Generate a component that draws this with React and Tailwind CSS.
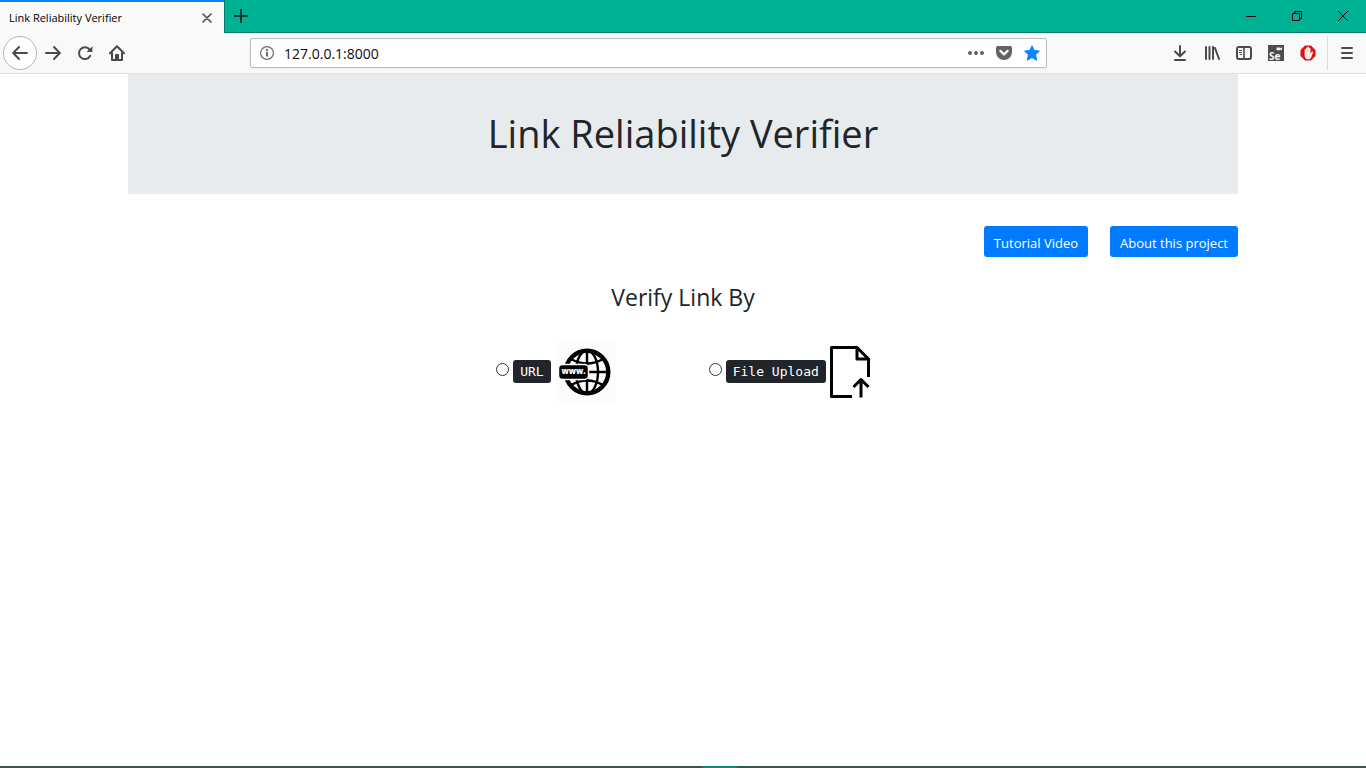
import React from "react";

const ICON = "h-4 w-4 text-[#4a4a4a]";

function BackIcon() {
  return (
    <svg viewBox="0 0 16 16" className={ICON} fill="none" stroke="currentColor" strokeWidth="2" strokeLinecap="round" strokeLinejoin="round">
      <path d="M15 8H1.5M7 2L1.2 8L7 14" />
    </svg>
  );
}

function ForwardIcon() {
  return (
    <svg viewBox="0 0 16 16" className={ICON} fill="none" stroke="currentColor" strokeWidth="2" strokeLinecap="round" strokeLinejoin="round">
      <path d="M1 8H14.5M9 2L14.8 8L9 14" />
    </svg>
  );
}

function ReloadIcon() {
  return (
    <svg viewBox="0 0 16 16" className={ICON} fill="none" stroke="currentColor" strokeWidth="2" strokeLinecap="round">
      <path d="M12.6 4.6A5.9 5.9 0 1 0 13.2 10.8" />
      <path d="M15.4 1.2V7H9.6z" fill="currentColor" stroke="none" />
    </svg>
  );
}

function HomeIcon() {
  return (
    <svg viewBox="0 0 16 16" className={ICON} fill="none" stroke="currentColor" strokeWidth="2" strokeLinecap="round" strokeLinejoin="round">
      <path d="M1 8.2L8 1.3L15 8.2" />
      <path d="M3 8V15H13V8" />
      <path d="M6.5 14.5V9.5H9.5V14.5z" fill="currentColor" strokeWidth="1" />
    </svg>
  );
}

function InfoIcon() {
  return (
    <svg viewBox="0 0 16 16" className="h-4 w-4 text-[#6b6b6b]" fill="none" stroke="currentColor">
      <circle cx="8" cy="8" r="6.4" strokeWidth="1.2" />
      <path d="M8 7V11.6" strokeWidth="2" />
      <path d="M8 4V6" strokeWidth="2" />
    </svg>
  );
}

function DotsIcon() {
  return (
    <svg viewBox="0 0 16 16" className="h-4 w-4 text-[#636363]" fill="currentColor">
      <circle cx="2" cy="8" r="2" />
      <circle cx="8" cy="8" r="2" />
      <circle cx="14" cy="8" r="2" />
    </svg>
  );
}

function PocketIcon() {
  return (
    <svg viewBox="0 0 16 16" className="h-4 w-4" fill="none">
      <path d="M1.5 1H14.5Q16 1 16 2.5V7A8 8 0 0 1 0 7V2.5Q0 1 1.5 1z" fill="#636363" />
      <path d="M4.3 5.8L8 9.4L11.7 5.8" stroke="#ffffff" strokeWidth="2.2" strokeLinecap="round" strokeLinejoin="round" />
    </svg>
  );
}

function StarIcon() {
  return (
    <svg viewBox="0 0 16 16" className="h-4 w-4 text-[#0a84ff]" fill="currentColor" stroke="currentColor" strokeWidth="1" strokeLinejoin="round">
      <path d="M8 .8L10.2 5.5L15.4 6.1L11.6 9.7L12.7 15.2L8 12.5L3.3 15.2L4.4 9.7L.6 6.1L5.8 5.5z" />
    </svg>
  );
}

function DownloadIcon() {
  return (
    <svg viewBox="0 0 16 16" className={ICON} fill="none" stroke="currentColor" strokeWidth="2" strokeLinecap="round" strokeLinejoin="round">
      <path d="M8 1V11M3 6.5L8 11.3L13 6.5M3 15H13" />
    </svg>
  );
}

function LibraryIcon() {
  return (
    <svg viewBox="0 0 16 16" className={ICON} fill="none" stroke="currentColor" strokeWidth="2" strokeLinecap="round">
      <path d="M2 2V14M5.5 2V14M9 2V14M11 3L15 14" />
    </svg>
  );
}

function SidebarIcon() {
  return (
    <svg viewBox="0 0 16 16" className={ICON} fill="none" stroke="currentColor">
      <rect x="1" y="2" width="14" height="12" rx="2" strokeWidth="2" />
      <path d="M8 2V14" strokeWidth="1.6" />
      <path d="M3 5.5H6M3 7.5H6M4 9.5H6" strokeWidth="1" />
    </svg>
  );
}

function SeleniumIcon() {
  return (
    <svg viewBox="0 0 16 16" className="h-4 w-4">
      <rect width="16" height="16" fill="#4d4d4d" />
      <path d="M8.5 2.5H12V3.2L14 2.3V5.2L12 4.5V5.2H8.5z" fill="#f3f3f3" />
      <text x="1" y="14.5" fontFamily="Open Sans, sans-serif" fontSize="10" fontWeight="700" fill="#f3f3f3">Se</text>
    </svg>
  );
}

function BlockerIcon() {
  return (
    <svg viewBox="0 0 16 16" className="h-4 w-4">
      <path d="M5 .5H11L15.5 5V11L11 15.5H5L.5 11V5z" fill="#e80c0c" />
      <path d="M4.6 4.5Q5.3 3.5 6 4.5V3Q6.7 2 7.5 3V2Q8.3 1.2 9 2V3Q9.8 2.2 10.5 3.2V8.5L12 6.5Q13.4 6 13 7.6L11.2 12.4Q10.2 14.4 8 14.4Q4.6 14 4.6 10.5z" fill="#f4eeee" />
      <path d="M6 4.5V7.5M7.5 3V7.2M9 3V7.2" stroke="#d8bcbc" strokeWidth=".4" />
    </svg>
  );
}

function MenuIcon() {
  return (
    <svg viewBox="0 0 16 16" className={ICON} fill="none" stroke="currentColor" strokeWidth="2" strokeLinecap="round">
      <path d="M3 3H13M3 8H13M3 13H13" />
    </svg>
  );
}

function GlobeIcon() {
  return (
    <svg viewBox="0 0 60 60" className="h-15 w-15 bg-[#fcfcfc]" fill="none" stroke="#000000">
      <circle cx="32" cy="30" r="21.3" strokeWidth="4.4" />
      <path d="M32 8V52M11 30H53" strokeWidth="2.4" />
      <ellipse cx="32" cy="30" rx="11" ry="21.5" strokeWidth="2.4" />
      <path d="M16 17Q32 26 48 17M16 43Q32 34 48 43" strokeWidth="2.4" />
      <rect x="3.5" y="22.5" width="30" height="15" rx="4" fill="#000000" stroke="#fcfcfc" strokeWidth="1.5" />
      <text x="18.5" y="32" textAnchor="middle" fontFamily="Open Sans, sans-serif" fontSize="8" fontWeight="800" fill="#ffffff" stroke="none">www.</text>
    </svg>
  );
}

function UploadIcon() {
  return (
    <svg viewBox="0 0 40 52" className="h-13 w-10" fill="none" stroke="#000000" strokeWidth="3" strokeLinejoin="round">
      <path d="M22 50.5H1.5V1.5H27L38.5 13V31" />
      <path d="M27 2V13H38" />
      <path d="M31 51.5V34M23.5 41L31 33.5L38.5 41" />
    </svg>
  );
}

function ToolButton({ label, children }) {
  return (
    <button type="button" aria-label={label} className="flex h-8 w-8 items-center justify-center">
      {children}
    </button>
  );
}

function TitleBar() {
  return (
    <header className="flex h-[33px] items-stretch bg-[#00b294]">
      <div className="flex w-56 items-center justify-between border-t-2 border-[#0a84ff] bg-[#f9f9fa] pr-3 pl-[9px]">
        <span className="text-[11px] leading-4 text-black">Link Reliability Verifier</span>
        <button type="button" aria-label="Close tab" className="text-[#4a4a4a]">
          <svg viewBox="0 0 10 10" className="h-2.5 w-2.5" fill="none" stroke="currentColor" strokeWidth="1.6" strokeLinecap="round">
            <path d="M1 1L9 9M9 1L1 9" />
          </svg>
        </button>
      </div>
      <div className="flex grow items-center justify-between border-b border-l border-[#007e69]">
        <button type="button" aria-label="New tab" className="flex h-8 w-8 items-center justify-center text-[#063a31]">
          <svg viewBox="0 0 14 14" className="h-3.5 w-3.5" fill="none" stroke="currentColor" strokeWidth="2">
            <path d="M7 0V14M0 7H14" />
          </svg>
        </button>
        <div className="flex text-black">
          <button type="button" aria-label="Minimize" className="flex h-8 w-[46px] items-center justify-center">
            <svg viewBox="0 0 10 10" className="h-2.5 w-2.5" stroke="currentColor">
              <path d="M0 5.5H10" />
            </svg>
          </button>
          <button type="button" aria-label="Restore" className="flex h-8 w-[46px] items-center justify-center">
            <svg viewBox="0 0 10 10" className="h-2.5 w-2.5" fill="none" stroke="currentColor">
              <path d="M.5 2.5H7.5V9.5H.5zM2.5 2.5V.5H9.5V7.5H7.5" />
            </svg>
          </button>
          <button type="button" aria-label="Close window" className="flex h-8 w-[46px] items-center justify-center">
            <svg viewBox="0 0 10 10" className="h-2.5 w-2.5" fill="none" stroke="currentColor">
              <path d="M0 0L10 10M10 0L0 10" />
            </svg>
          </button>
        </div>
      </div>
    </header>
  );
}

function NavBar() {
  return (
    <nav aria-label="Browser" className="flex h-[41px] items-center border-b border-[#e0e0e1] bg-[#f9f9fa]">
      <div className="flex items-center pl-[3px]">
        <button type="button" aria-label="Back" className="flex h-[34px] w-[34px] items-center justify-center rounded-full border border-[#b5b5b6] bg-white">
          <BackIcon />
        </button>
        <ToolButton label="Forward"><ForwardIcon /></ToolButton>
        <ToolButton label="Reload"><ReloadIcon /></ToolButton>
        <ToolButton label="Home"><HomeIcon /></ToolButton>
      </div>
      <div className="mr-[117px] ml-[117px] flex h-[30px] grow items-center rounded-xs border border-[#bcbcbd] bg-white pr-1.5 pl-2 shadow-xs">
        <InfoIcon />
        <input
          type="text"
          aria-label="Address"
          defaultValue="127.0.0.1:8000"
          className="min-w-0 grow bg-transparent px-[9px] pt-0.5 text-sm text-[#0c0c0d] outline-none"
        />
        <div className="flex items-center gap-3">
          <button type="button" aria-label="Page actions"><DotsIcon /></button>
          <button type="button" aria-label="Save to Pocket"><PocketIcon /></button>
          <button type="button" aria-label="Edit bookmark"><StarIcon /></button>
        </div>
      </div>
      <div className="flex items-center">
        <ToolButton label="Downloads"><DownloadIcon /></ToolButton>
        <ToolButton label="Library"><LibraryIcon /></ToolButton>
        <ToolButton label="Sidebars"><SidebarIcon /></ToolButton>
        <ToolButton label="Selenium IDE"><SeleniumIcon /></ToolButton>
        <ToolButton label="Ad blocker"><BlockerIcon /></ToolButton>
        <div className="ml-[3px] flex h-[34px] items-center border-l border-[#dcdcdd] pr-[3px] pl-[3px]">
          <ToolButton label="Menu"><MenuIcon /></ToolButton>
        </div>
      </div>
    </nav>
  );
}

function Choice({ id, label, children }) {
  return (
    <div className="flex items-center">
      <input
        type="radio"
        name="verify"
        id={id}
        className="mr-1 mb-1.5 h-[13px] w-[13px] appearance-none rounded-full border border-[#333333] bg-white checked:border-4"
      />
      <label htmlFor={id} className="flex items-center gap-1">
        <kbd className="mb-0.5 rounded-[3px] bg-[#212529] px-[7px] py-0.5 font-['DejaVu_Sans_Mono',monospace] text-[13px] leading-[19px] text-white">
          {label}
        </kbd>
        {children}
      </label>
    </div>
  );
}

function LinkButton({ children }) {
  return (
    <a href="#" className="flex h-[31px] items-center rounded-[3px] bg-[#007bff] px-2.5 pt-1 text-[13px] text-white">
      {children}
    </a>
  );
}

export default function App() {
  return (
    <div className="flex min-h-screen flex-col bg-white font-['Open_Sans','Noto_Sans',sans-serif] text-[#212529]">
      <TitleBar />
      <NavBar />
      <main className="mx-auto w-full max-w-[1110px] grow">
        <div className="flex h-30 items-center justify-center bg-[#e7ebee] pb-0.5">
          <h1 className="text-[38px] leading-12">Link Reliability Verifier</h1>
        </div>
        <div className="mt-8 flex justify-end gap-[22px]">
          <LinkButton>Tutorial Video</LinkButton>
          <LinkButton>About this project</LinkButton>
        </div>
        <h2 className="mt-6 text-center text-[23px] leading-8">Verify Link By</h2>
        <form className="mt-[29px] flex justify-center gap-[94px]">
          <Choice id="by-url" label="URL"><GlobeIcon /></Choice>
          <Choice id="by-file" label="File Upload"><UploadIcon /></Choice>
        </form>
      </main>
      <footer className="flex h-0.5 justify-center bg-[#3a5653]">
        <div className="ml-[74px] w-[34px] bg-[#128573]" />
      </footer>
    </div>
  );
}
